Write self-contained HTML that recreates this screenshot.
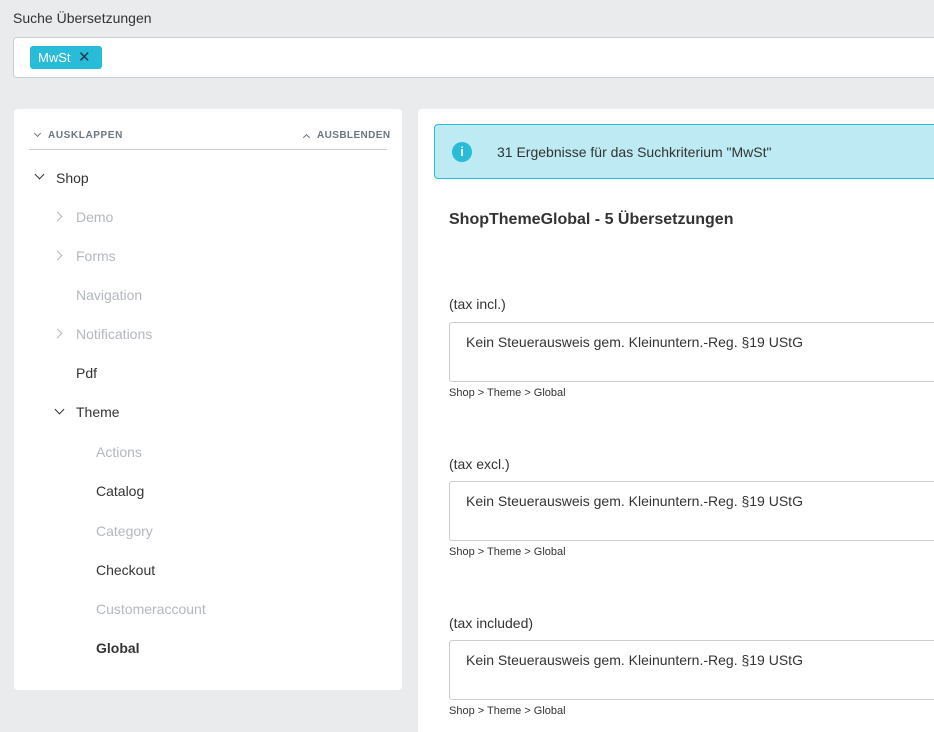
<!DOCTYPE html>
<html><head><meta charset="utf-8"><style>
*{box-sizing:border-box;margin:0;padding:0}
html,body{width:934px;height:732px;overflow:hidden}
body{background:#e9ebed;font-family:"Liberation Sans",sans-serif;color:#333;position:relative}
.abs{position:absolute}
.t{position:absolute;white-space:nowrap}
.item{position:absolute;font-size:14px;line-height:18px}
.gray{color:#b3b8bd}
.chev{position:absolute;width:7px;height:7px;border-right:1.6px solid #333;border-bottom:1.6px solid #333}
.box{position:absolute;left:449px;width:500px;height:60px;border:1px solid #c9cdd2;border-radius:3px;background:#fff;font-size:14px;padding:11px 16px;color:#333}
.path{position:absolute;left:449px;font-size:11px;color:#333}
.lab{position:absolute;left:449px;font-size:14px}
</style></head><body>
<div class="t" style="left:13px;top:10px;font-size:14px;color:#333">Suche Übersetzungen</div>
<div class="abs" style="left:13px;top:37px;width:940px;height:41px;background:#fff;border:1px solid #c9cdd2;border-radius:4px"></div>
<div class="abs" style="left:30px;top:46px;width:72px;height:23px;background:#28bcd9;border-radius:3px;color:#fff;font-size:13px;line-height:23px;padding-left:8px">MwSt<span style="position:absolute;left:48px;top:0px;font-size:15px;color:#1e3b48">✕</span></div>

<div class="abs" style="left:14px;top:109px;width:388px;height:581px;background:#fff;border-radius:4px"></div>
<div class="chev" style="left:35px;top:131px;width:5px;height:5px;border-width:1.3px;border-color:#6b7680;transform:rotate(45deg)"></div>
<div class="t" style="left:48px;top:130px;font-size:10px;font-weight:bold;color:#6b7680;letter-spacing:.6px">AUSKLAPPEN</div>
<div class="chev" style="left:304px;top:135px;width:5px;height:5px;border-width:1.3px;border-color:#6b7680;transform:rotate(225deg)"></div>
<div class="t" style="left:317px;top:130px;font-size:10px;font-weight:bold;color:#6b7680;letter-spacing:.4px">AUSBLENDEN</div>
<div class="abs" style="left:29px;top:149px;width:358px;height:1px;background:#c9cdd2"></div>

<div class="chev" style="left:36px;top:171px;transform:rotate(45deg)"></div>
<div class="item" style="left:56px;top:169px">Shop</div>
<div class="chev" style="left:54px;top:213px;transform:rotate(-45deg);border-color:#b3b8bd"></div>
<div class="item gray" style="left:76px;top:208px">Demo</div>
<div class="chev" style="left:54px;top:252px;transform:rotate(-45deg);border-color:#b3b8bd"></div>
<div class="item gray" style="left:76px;top:247px">Forms</div>
<div class="item gray" style="left:76px;top:286px">Navigation</div>
<div class="chev" style="left:54px;top:330px;transform:rotate(-45deg);border-color:#b3b8bd"></div>
<div class="item gray" style="left:76px;top:325px">Notifications</div>
<div class="item" style="left:76px;top:364px">Pdf</div>
<div class="chev" style="left:56px;top:406px;transform:rotate(45deg)"></div>
<div class="item" style="left:76px;top:403px">Theme</div>
<div class="item gray" style="left:96px;top:443px">Actions</div>
<div class="item" style="left:96px;top:482px">Catalog</div>
<div class="item gray" style="left:96px;top:522px">Category</div>
<div class="item" style="left:96px;top:561px">Checkout</div>
<div class="item gray" style="left:96px;top:600px">Customeraccount</div>
<div class="item" style="left:96px;top:639px;font-weight:bold">Global</div>

<div class="abs" style="left:418px;top:109px;width:600px;height:623px;background:#fff;border-radius:4px 4px 0 0"></div>
<div class="abs" style="left:434px;top:124px;width:600px;height:55px;background:#bdeaf3;border:1px solid #28bcd9;border-radius:4px"></div>
<div class="abs" style="left:452px;top:142px;width:20px;height:20px;border-radius:50%;background:#28bcd9;color:#fff;font-size:13px;font-weight:bold;text-align:center;line-height:20px">i</div>
<div class="t" style="left:497px;top:144px;font-size:14px">31 Ergebnisse für das Suchkriterium "MwSt"</div>
<div class="t" style="left:449px;top:211px;font-size:16px;font-weight:bold">ShopThemeGlobal - 5 Übersetzungen</div>

<div class="lab" style="top:296px">(tax incl.)</div>
<div class="box" style="top:322px">Kein Steuerausweis gem. Kleinuntern.-Reg. §19 UStG</div>
<div class="path" style="top:387px">Shop &gt; Theme &gt; Global</div>
<div class="lab" style="top:456px">(tax excl.)</div>
<div class="box" style="top:481px">Kein Steuerausweis gem. Kleinuntern.-Reg. §19 UStG</div>
<div class="path" style="top:546px">Shop &gt; Theme &gt; Global</div>
<div class="lab" style="top:615px">(tax included)</div>
<div class="box" style="top:640px">Kein Steuerausweis gem. Kleinuntern.-Reg. §19 UStG</div>
<div class="path" style="top:705px">Shop &gt; Theme &gt; Global</div>
</body></html>
